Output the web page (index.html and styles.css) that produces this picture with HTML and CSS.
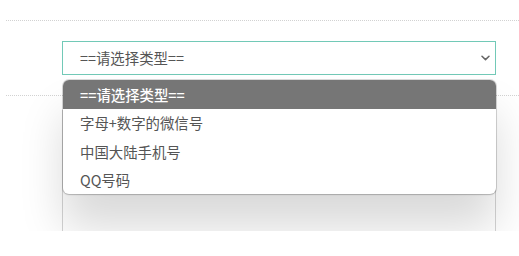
FILE: index.html
```html
<!DOCTYPE html>
<html lang="zh-CN">
<head>
<meta charset="utf-8">
<title>选择类型</title>
<link rel="stylesheet" href="styles.css">
</head>
<body>
<div class="page">
  <div class="rule"></div>
  <div class="field">
    <div class="select">
      <span class="select-text">==请选择类型==</span>
      <svg class="chevron" width="9" height="6" viewBox="0 0 9 6"><path d="M1 1.2 L4.5 4.6 L8 1.2" fill="none" stroke="#666" stroke-width="1.5" stroke-linecap="round" stroke-linejoin="round"/></svg>
    </div>
  </div>
  <div class="rule rule-second"></div>
  <div class="field">
    <div class="textarea"></div>
  </div>
  <ul class="popup">
    <li class="option selected">==请选择类型==</li>
    <li class="option">字母+数字的微信号</li>
    <li class="option">中国大陆手机号</li>
    <li class="option">QQ号码</li>
  </ul>
</div>
</body>
</html>
```
FILE: styles.css
```css
html, body {
  margin: 0;
  padding: 0;
  background: #fff;
}
body {
  font-family: "Noto Sans CJK SC", "Noto Sans", sans-serif;
  font-size: 14.4px;
  color: #555;
}
.page {
  position: relative;
  height: 231px;
  overflow: hidden;
  padding-top: 20px;
  box-sizing: border-box;
}
.rule {
  margin-left: 6px;
  border-top: 1px dotted #d2d2d2;
}
.rule-second {
  margin-top: 20px;
}
.field {
  margin-left: 62px;
  width: 434px;
  margin-top: 20px;
}
.select {
  box-sizing: border-box;
  height: 34px;
  border: 1px solid #72c9b7;
  display: flex;
  align-items: center;
  justify-content: space-between;
  padding: 0 5px 0 17px;
  background: #fff;
}
.select-text {
  line-height: 1;
}
.chevron {
  display: block;
}
.field + .rule-second + .field {
  margin-top: 14px;
}
.textarea {
  box-sizing: border-box;
  height: 200px;
  border: 1px solid #d4d4d4;
  background: #fff;
}
.popup {
  position: absolute;
  left: 63px;
  top: 80px;
  width: 433px;
  margin: 0;
  padding: 0;
  list-style: none;
  background: #fff;
  border-radius: 6px;
  overflow: hidden;
  box-shadow: 0 0 0 1px rgba(0,0,0,0.14), 0 1px 2px rgba(0,0,0,0.12), 0 34px 44px rgba(0,0,0,0.15);
}
.option {
  height: 28.5px;
  display: flex;
  align-items: center;
  padding-left: 17px;
  color: #555;
}
.option.selected {
  background: #767676;
  color: #fff;
  font-weight: 500;
}
```
